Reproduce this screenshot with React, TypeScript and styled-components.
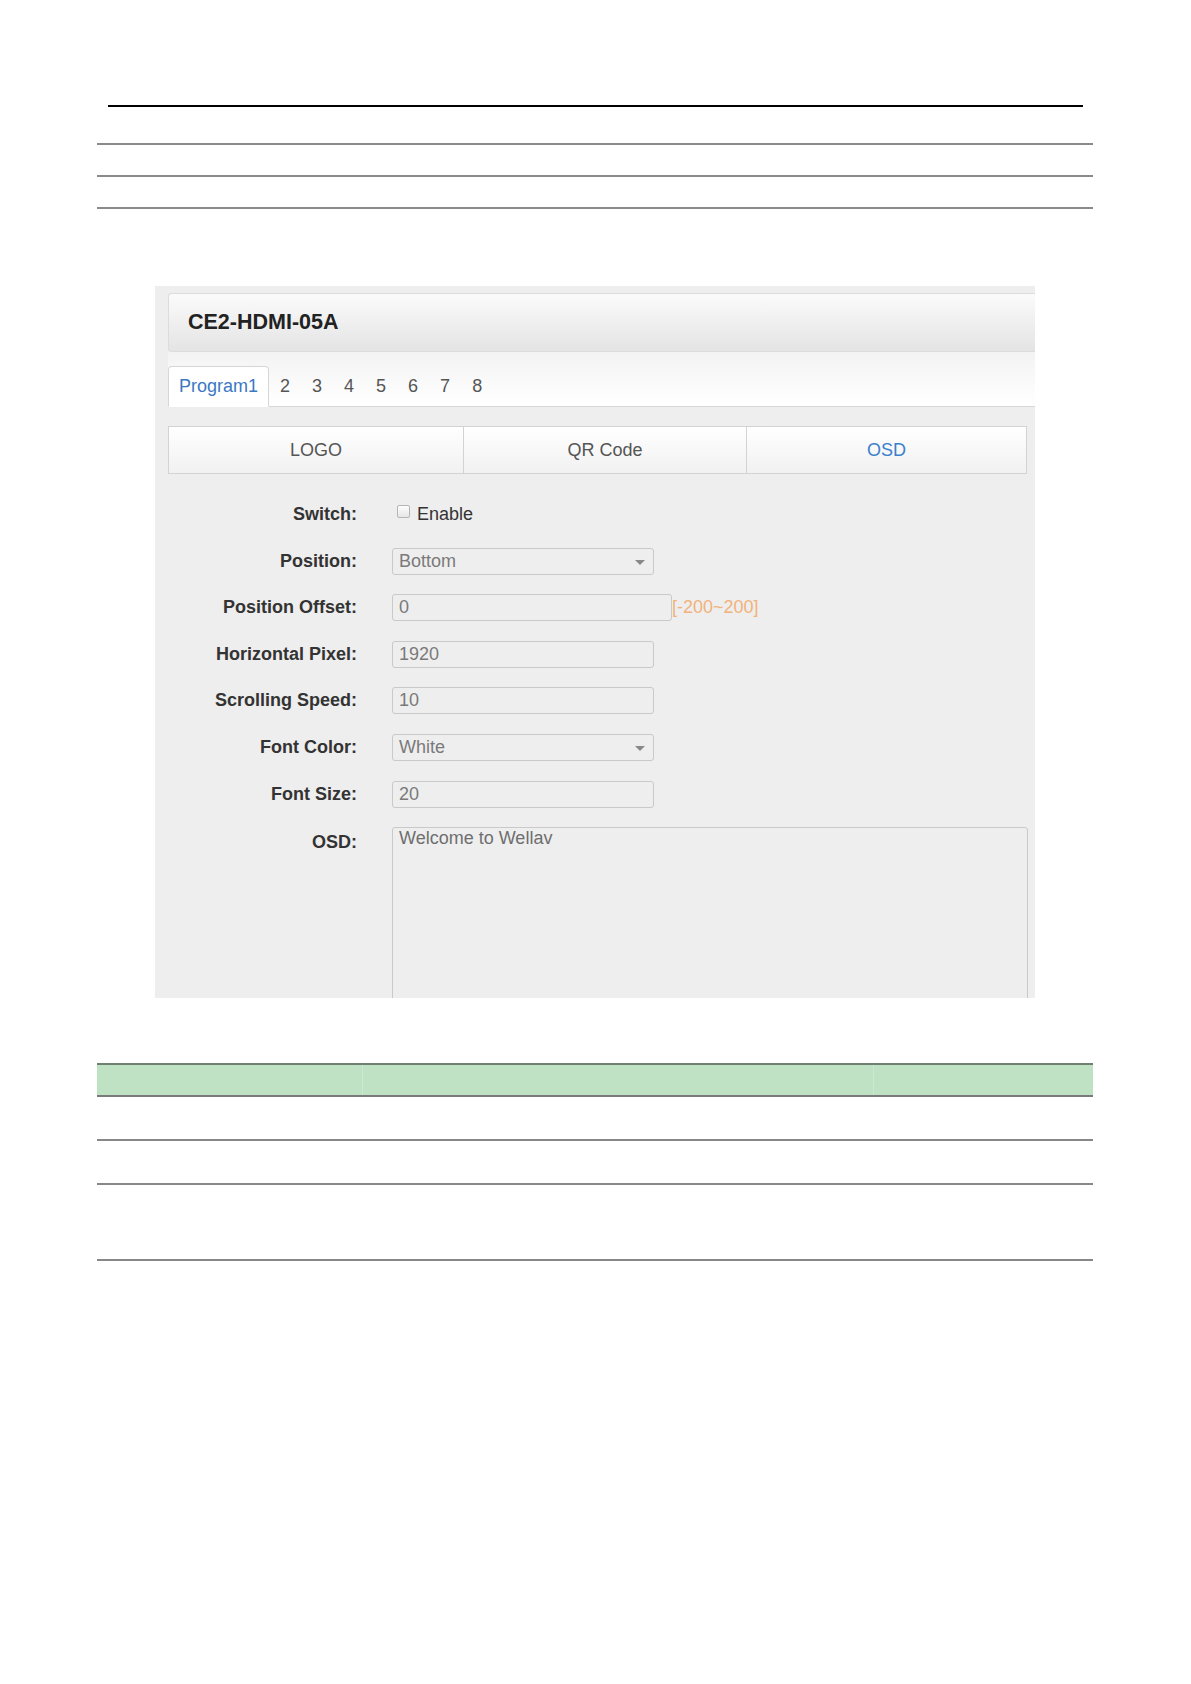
import React from "react";
import styled, { createGlobalStyle } from "styled-components";

const GlobalStyle = createGlobalStyle`
  html, body {
    margin: 0;
    padding: 0;
    background: #fff;
  }
  * {
    box-sizing: border-box;
  }
`;

const Page = styled.div`
  width: 1191px;
  min-height: 1684px;
  background: #fff;
  padding-top: 105px;
  font-family: "Liberation Sans", Arial, sans-serif;
`;

const TopRule = styled.div`
  height: 2px;
  margin: 0 108px;
  background: #000;
`;

const RuleStack = styled.div`
  display: flex;
  flex-direction: column;
  gap: 30px;
  margin: 36px 98px 0 97px;
`;

const ThinRule = styled.div`
  height: 2px;
  background: #8a8a8a;
`;

const Panel = styled.div`
  width: 880px;
  height: 712px;
  margin: 77px 0 0 155px;
  padding: 7px 0 0 13px;
  background: #eeeeee;
  overflow: hidden;
`;

const DeviceHeader = styled.div`
  height: 59px;
  display: flex;
  align-items: center;
  padding-left: 19px;
  border: 1px solid #dcdcdc;
  border-right: none;
  border-radius: 4px 0 0 4px;
  background: linear-gradient(#fbfbfb, #ededed 60%, #e4e4e4);
  font-size: 21.5px;
  font-weight: bold;
  color: #222;
`;

const TabBar = styled.div`
  display: flex;
  align-items: flex-end;
  height: 55px;
  background: linear-gradient(#f3f3f3, #ffffff);
  border-bottom: 1px solid #d6d6d6;
`;

const ProgramTab = styled.div<{ $active?: boolean }>`
  height: 41px;
  display: flex;
  align-items: center;
  padding: 0 ${(p) => (p.$active ? "10px" : "10px")};
  margin-bottom: -1px;
  font-size: 18px;
  color: ${(p) => (p.$active ? "#3a78c3" : "#555")};
  background: ${(p) => (p.$active ? "#fff" : "transparent")};
  border: 1px solid ${(p) => (p.$active ? "#d6d6d6" : "transparent")};
  border-bottom-color: ${(p) => (p.$active ? "#fff" : "transparent")};
  border-radius: 4px 4px 0 0;
`;

const SubTabs = styled.div`
  display: grid;
  grid-template-columns: 294px 283px 1fr;
  width: 859px;
  height: 48px;
  margin-top: 19px;
  border: 1px solid #d3d3d3;
  background: linear-gradient(#ffffff, #f1f1f1);
`;

const SubTab = styled.div<{ $active?: boolean }>`
  display: flex;
  align-items: center;
  justify-content: center;
  font-size: 18px;
  color: ${(p) => (p.$active ? "#3a80cc" : "#555")};
  & + & {
    border-left: 1px solid #d3d3d3;
  }
`;

const Form = styled.div`
  display: grid;
  grid-template-columns: 189px 1fr;
  column-gap: 35px;
  row-gap: 19.6px;
  margin-top: 27px;
`;

const Label = styled.div`
  height: 27px;
  display: flex;
  align-items: center;
  justify-content: flex-end;
  font-size: 18px;
  font-weight: bold;
  color: #333;
`;

const Field = styled.div`
  display: flex;
  align-items: center;
  height: 27px;
`;

const CheckBox = styled.span`
  width: 13px;
  height: 13px;
  margin: 0 7px 0 5px;
  position: relative;
  top: -3px;
  border: 1px solid #b5b5b5;
  border-radius: 2px;
  background: linear-gradient(#fdfdfd, #e6e6e6);
`;

const CheckText = styled.span`
  font-size: 18px;
  color: #333;
`;

const InputBox = styled.div<{ $width?: number }>`
  position: relative;
  width: ${(p) => p.$width ?? 262}px;
  height: 27px;
  display: flex;
  align-items: center;
  padding-left: 6px;
  border: 1px solid #c9c9c9;
  border-radius: 3px;
  background: #eeeeee;
  font-size: 18px;
  color: #7a7a7a;
`;

const Caret = styled.span`
  position: absolute;
  right: 8px;
  top: 11px;
  width: 0;
  height: 0;
  border-left: 5px solid transparent;
  border-right: 5px solid transparent;
  border-top: 5px solid #888;
`;

const Hint = styled.span`
  font-size: 18px;
  color: #f2b27c;
`;

const OsdLabel = styled(Label)`
  align-self: start;
  height: 30px;
`;

const OsdArea = styled.div`
  width: 636px;
  height: 220px;
  padding: 0 6px;
  border: 1px solid #c9c9c9;
  border-radius: 3px;
  background: #eeeeee;
  font-size: 18px;
  color: #6e6e6e;
`;

const Table = styled.div`
  width: 996px;
  margin: 65px 0 0 97px;
`;

const TableHead = styled.div`
  display: grid;
  grid-template-columns: 265px 511px 1fr;
  height: 34px;
  background: #bfe2c4;
  border-top: 2px solid #6f7f70;
  border-bottom: 2px solid #7a7a7a;
`;

const HeadCell = styled.div`
  & + & {
    border-left: 1px solid #cde8d0;
  }
`;

const TableRow = styled.div<{ $height: number }>`
  height: ${(p) => p.$height}px;
  border-bottom: 2px solid #888;
`;

const fields: { label: string; value: string; select?: boolean; width?: number; hint?: string }[] = [
  { label: "Position:", value: "Bottom", select: true },
  { label: "Position Offset:", value: "0", width: 280, hint: "[-200~200]" },
  { label: "Horizontal Pixel:", value: "1920" },
  { label: "Scrolling Speed:", value: "10" },
  { label: "Font Color:", value: "White", select: true },
  { label: "Font Size:", value: "20" },
];

const App: React.FC = () => {
  return (
    <>
      <GlobalStyle />
      <Page>
        <TopRule />
        <RuleStack>
          <ThinRule />
          <ThinRule />
          <ThinRule />
        </RuleStack>

        <Panel>
          <DeviceHeader>CE2-HDMI-05A</DeviceHeader>
          <TabBar>
            <ProgramTab $active>Program1</ProgramTab>
            {["2", "3", "4", "5", "6", "7", "8"].map((n) => (
              <ProgramTab key={n}>{n}</ProgramTab>
            ))}
          </TabBar>
          <SubTabs>
            <SubTab>LOGO</SubTab>
            <SubTab>QR Code</SubTab>
            <SubTab $active>OSD</SubTab>
          </SubTabs>

          <Form>
            <Label>Switch:</Label>
            <Field>
              <CheckBox />
              <CheckText>Enable</CheckText>
            </Field>
            {fields.map((f) => (
              <React.Fragment key={f.label}>
                <Label>{f.label}</Label>
                <Field>
                  <InputBox $width={f.width}>
                    {f.value}
                    {f.select && <Caret />}
                  </InputBox>
                  {f.hint && <Hint>{f.hint}</Hint>}
                </Field>
              </React.Fragment>
            ))}
            <OsdLabel>OSD:</OsdLabel>
            <OsdArea>Welcome to Wellav</OsdArea>
          </Form>
        </Panel>

        <Table>
          <TableHead>
            <HeadCell />
            <HeadCell />
            <HeadCell />
          </TableHead>
          <TableRow $height={44} />
          <TableRow $height={44} />
          <TableRow $height={76} />
        </Table>
      </Page>
    </>
  );
};

export default App;
